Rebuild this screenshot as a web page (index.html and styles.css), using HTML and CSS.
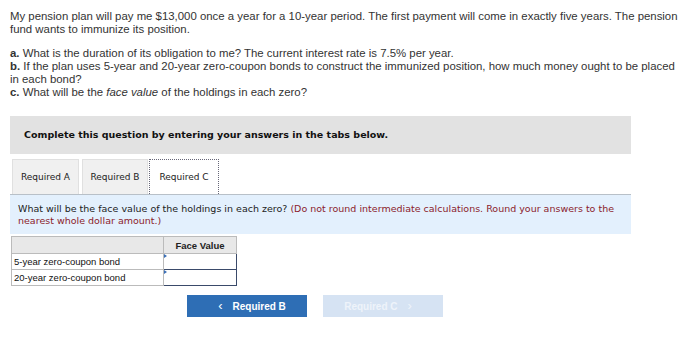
FILE: index.html
```html
<!DOCTYPE html>
<html>
<head>
<meta charset="utf-8">
<link rel="stylesheet" href="styles.css">
</head>
<body>
<p class="intro">My pension plan will pay me $13,000 once a year for a 10-year period. The first payment will come in exactly five years. The pension fund wants to immunize its position.</p>
<p class="q"><b>a.</b> What is the duration of its obligation to me? The current interest rate is 7.5% per year.<br><b>b.</b> If the plan uses 5-year and 20-year zero-coupon bonds to construct the immunized position, how much money ought to be placed in each bond?<br><b>c.</b> What will be the <i>face value</i> of the holdings in each zero?</p>
<div class="panel">
  <div class="instr">Complete this question by entering your answers in the tabs below.</div>
  <div class="tabs">
    <div class="tab ta">Required A</div>
    <div class="tab tb">Required B</div>
    <div class="tab tc active">Required C</div>
  </div>
  <div class="prompt">What will be the face value of the holdings in each zero? <span class="note">(Do not round intermediate calculations. Round your answers to the nearest whole dollar amount.)</span></div>
</div>
<table class="grid">
  <tr><th class="blank"></th><th class="hd">Face Value</th></tr>
  <tr><td class="lbl">5-year zero-coupon bond</td><td class="inp"><span class="mark"></span></td></tr>
  <tr><td class="lbl">20-year zero-coupon bond</td><td class="inp"><span class="mark"></span></td></tr>
</table>
<div class="nav">
  <div class="btn prev"><span class="chev">&lsaquo;</span>Required B</div>
  <div class="btn next">Required C<span class="chev">&rsaquo;</span></div>
</div>
</body>
</html>
```
FILE: styles.css
```css
html, body { margin: 0; padding: 0; background: #fff; }
body { padding: 10px 10px 0 10px; color: #333; font-family: "Liberation Sans", Arial, sans-serif; }
.intro, .q { font-size: 11.4px; line-height: 13px; margin: 0; width: 670px; }
.q { margin-top: 11px; }
.panel { width: 621px; margin-top: 17px; font-family: "DejaVu Sans", Verdana, sans-serif; }
.instr { background: #e2e2e2; height: 38px; line-height: 38px; padding-left: 14px; font-weight: bold; font-size: 9.5px; color: #111; }
.tabs { display: flex; margin-top: 5px; height: 35px; padding-left: 2px; }
.tab { background: #f0f0f0; border: 1px solid #e0e0e0; border-bottom: none; font-size: 9px; color: #222; line-height: 34px; box-sizing: border-box; text-align: center; }
.ta { width: 67px; }
.tb { width: 66px; margin-left: 3px; }
.tc { width: 70px; margin-left: 1px; }
.tab.active { background: #fff; border: 1px dotted #667; border-bottom: none; }
.prompt { background: #e3f0fd; border-top: 1px solid #b8c0c8; font-size: 9.5px; line-height: 12px; padding: 8px 8px 7px 8px; color: #222; }
.note { color: #8b1c2c; }
.grid { border-collapse: collapse; margin-top: 2px; margin-left: 1px; font-family: "Liberation Sans", Arial, sans-serif; font-size: 9.5px; }
.grid th { background: #e8e8e8; border: 1px solid #bbb; height: 16px; padding: 0; }
.grid th.blank { width: 151px; }
.grid th.hd { width: 72px; font-weight: bold; color: #222; }
.grid td { border: 1px solid #bbb; height: 15px; padding: 0; }
.grid td.lbl { padding-left: 2px; color: #111; }
.grid td.inp { border: 1px solid #3a4a6a; position: relative; }
.mark { position: absolute; left: 0; top: 0; width: 0; height: 0; border-left: 3px solid #3a6fb7; border-top: 2px solid transparent; border-bottom: 2px solid transparent; }
.nav { display: flex; gap: 16px; margin-top: 9px; margin-left: 177px; }
.btn { width: 120px; height: 22px; line-height: 22px; text-align: center; font-weight: bold; font-size: 10px; color: #fff; }
.prev { background: #2e6eb5; }
.next { background: #d6e3f3; color: #eef3fa; }
.chev { font-size: 13px; font-weight: normal; padding: 0 10px; }
```
